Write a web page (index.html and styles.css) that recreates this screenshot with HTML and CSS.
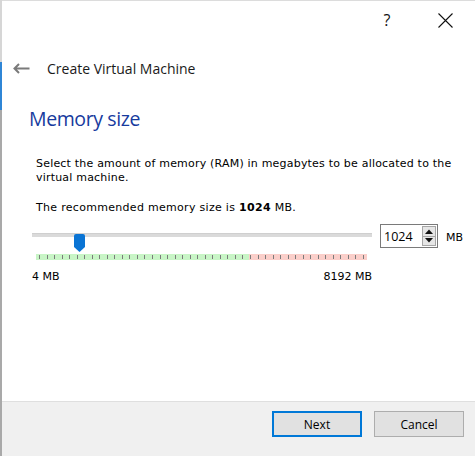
FILE: index.html
```html
<!DOCTYPE html>
<html>
<head>
<meta charset="utf-8">
<link rel="stylesheet" href="styles.css">
</head>
<body>
<div class="edge"></div>
<div class="window">
  <div class="titlebar">
    <span class="tb-btn help">?</span>
    <span class="tb-btn close">
      <svg width="15" height="15" viewBox="0 0 15 15"><path d="M0.5 0.5 L14.5 14.5 M14.5 0.5 L0.5 14.5" stroke="#111" stroke-width="1.1" fill="none"/></svg>
    </span>
  </div>
  <div class="nav">
    <svg class="back" width="17" height="11" viewBox="0 0 17 11"><path d="M1.5 5.5 H16.5 M6 1 L1.5 5.5 L6 10" stroke="#7a7a7a" stroke-width="2" fill="none"/></svg>
    <span class="nav-title">Create Virtual Machine</span>
  </div>
  <div class="content">
    <h1 class="heading">Memory size</h1>
    <p class="desc">Select the amount of memory (RAM) in megabytes to be allocated to the virtual machine.</p>
    <p class="desc rec">The recommended memory size is <b>1024</b> MB.</p>
    <div class="slider-row">
      <div class="slider">
        <div class="track-wrap">
          <div class="track"></div>
          <svg class="handle" width="11" height="18" viewBox="0 0 11 18"><path d="M0 2 Q0 0 2 0 H9 Q11 0 11 2 V13 L5.5 18 L0 13 Z" fill="#0a74d4"/></svg>
        </div>
        <div class="ticks"></div>
        <div class="range">
          <span>4 MB</span>
          <span>8192 MB</span>
        </div>
      </div>
      <div class="spinbox">
        <span class="spin-value">1024</span>
        <div class="spin-buttons">
          <div class="spin up"><svg width="8" height="5" viewBox="0 0 8 5"><path d="M0 5 L4 0.5 L8 5 Z" fill="#111"/></svg></div>
          <div class="spin down"><svg width="8" height="5" viewBox="0 0 8 5"><path d="M0 0 L4 4.5 L8 0 Z" fill="#111"/></svg></div>
        </div>
      </div>
      <span class="unit">MB</span>
    </div>
  </div>
  <div class="footer">
    <button class="btn primary">Next</button>
    <button class="btn">Cancel</button>
  </div>
</div>
</body>
</html>
```
FILE: styles.css
```css
html, body {
  margin: 0;
  padding: 0;
}
body {
  width: 475px;
  height: 456px;
  display: flex;
  overflow: hidden;
  background: #fff;
}
.edge {
  width: 2px;
  flex: none;
  background: linear-gradient(to bottom, #d6d6d6 0, #d6d6d6 62px, #2f86d6 62px, #2f86d6 110px, #a9a9a9 110px);
}
.window {
  flex: 1;
  display: flex;
  flex-direction: column;
  border-top: 1px solid #dcdcdc;
  background: #fff;
}
.titlebar {
  height: 38px;
  display: flex;
  justify-content: flex-end;
  align-items: center;
  gap: 38px;
  padding-right: 20px;
}
.tb-btn {
  width: 20px;
  height: 20px;
  display: flex;
  align-items: center;
  justify-content: center;
}
.help {
  font-family: "Open Sans", sans-serif;
  font-size: 16px;
  color: #111;
  line-height: 20px;
}
.nav {
  height: 58px;
  display: flex;
  align-items: center;
  padding-left: 11px;
  gap: 17px;
}
.back {
  display: block;
}
.nav-title {
  font-family: "Open Sans", sans-serif;
  font-size: 14px;
  color: #1a1a1a;
}
.content {
  padding-left: 27px;
}
.heading {
  margin: 8px 0 0 0;
  font-family: "Open Sans", sans-serif;
  font-weight: 400;
  font-size: 19.5px;
  letter-spacing: -0.4px;
  line-height: 28px;
  color: #173b9e;
}
.desc {
  margin: 24px 0 0 7px;
  font-family: "DejaVu Sans", sans-serif;
  font-size: 11px;
  letter-spacing: 0.2px;
  line-height: 14px;
  color: #000;
  width: 430px;
}
.desc.rec {
  margin-top: 16px;
  letter-spacing: 0.3px;
}
.slider-row {
  margin-top: 9px;
  display: flex;
  align-items: flex-start;
  padding-left: 3px;
}
.slider {
  width: 340px;
}
.track-wrap {
  position: relative;
  height: 20px;
}
.track {
  margin-top: 9px;
  height: 3px;
  background: #dadada;
  border-top: 1px solid #cfcfcf;
}
.handle {
  position: absolute;
  left: 42px;
  top: 1px;
}
.ticks {
  margin: 1px 5px 0 4px;
  height: 6px;
  background:
    repeating-linear-gradient(to right, transparent 0, transparent 3px, #7b7b7b 3px, #7b7b7b 4px, transparent 4px, transparent 7.535px) 0 1px / 100% 4px no-repeat,
    linear-gradient(to right, #c8f5c6 0, #c8f5c6 213px, #fbcfca 213px, #fbcfca 100%);
}
.range {
  margin-top: 10px;
  display: flex;
  justify-content: space-between;
  font-family: "DejaVu Sans", sans-serif;
  font-size: 11px;
  line-height: 14px;
  color: #000;
}
.spinbox {
  margin-left: 8px;
  width: 56px;
  height: 22px;
  border: 1px solid #7a7a7a;
  display: flex;
  align-items: center;
  justify-content: space-between;
  font-family: "Open Sans", sans-serif;
  font-size: 12.5px;
}
.spin-value {
  padding-left: 3px;
}
.spin-buttons {
  width: 14px;
  height: 20px;
  margin-right: 1px;
  display: flex;
  flex-direction: column;
  border: 1px solid #a6a6a6;
  box-sizing: border-box;
  background: #e6e6e6;
}
.spin {
  flex: 1;
  display: flex;
  align-items: center;
  justify-content: center;
}
.spin.up {
  border-bottom: 1px solid #a6a6a6;
}
.spin svg {
  display: block;
}
.unit {
  margin-left: 8px;
  margin-top: 7px;
  font-family: "DejaVu Sans", sans-serif;
  font-size: 11px;
  line-height: 14px;
}
.footer {
  margin-top: auto;
  height: 45px;
  border-top: 1px solid #dfdfdf;
  background: #f0f0f0;
  display: flex;
  justify-content: flex-end;
  align-items: flex-start;
  gap: 12px;
  padding: 9px 11px 0 0;
  box-sizing: content-box;
}
.btn {
  width: 90px;
  height: 26px;
  margin: 0;
  padding: 0;
  border: 1px solid #adadad;
  background: #e1e1e1;
  font-family: "Open Sans", sans-serif;
  font-size: 12px;
  color: #000;
}
.btn.primary {
  border: 2px solid #0078d7;
}
```
